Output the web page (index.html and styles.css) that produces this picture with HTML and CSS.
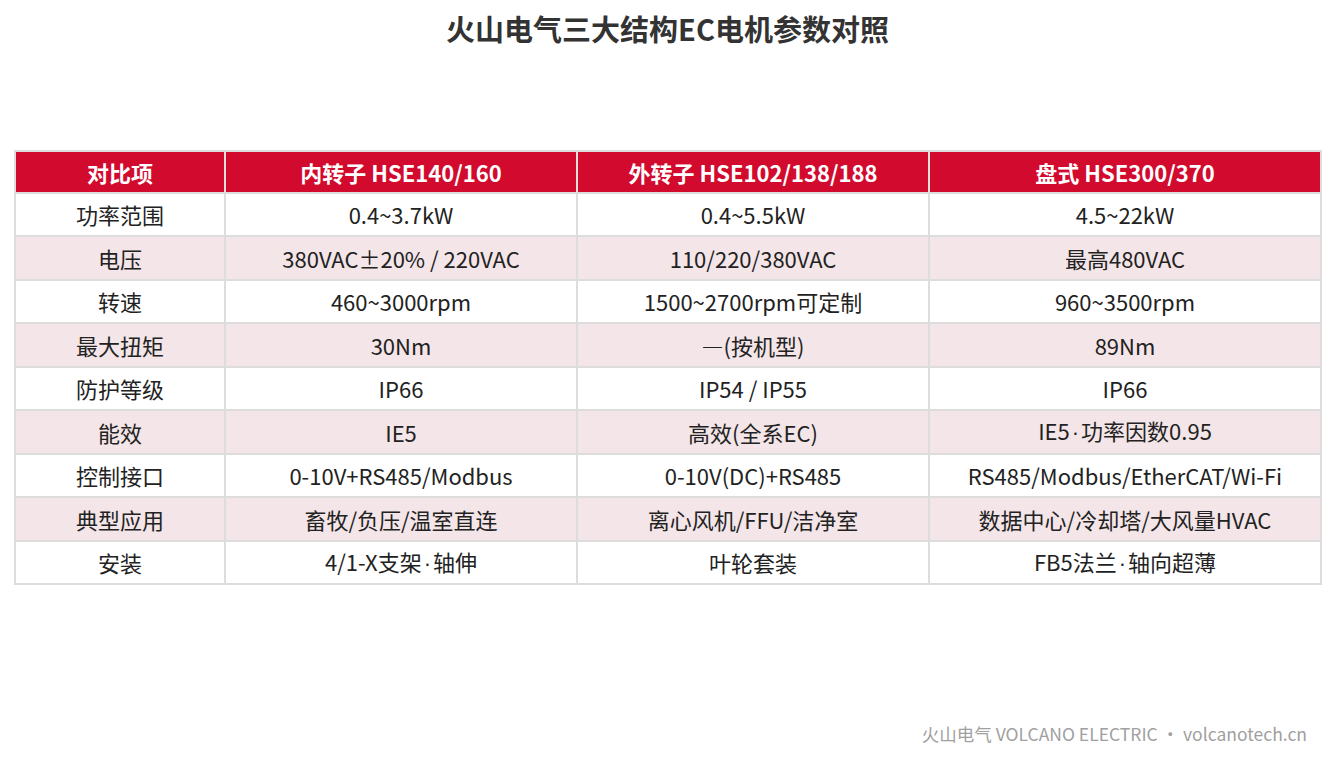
FILE: index.html
```html
<!DOCTYPE html>
<html lang="zh-CN">
<head>
<meta charset="utf-8">
<title>火山电气三大结构EC电机参数对照</title>
<link rel="stylesheet" href="styles.css">
</head>
<body>
<div class="page">
  <h1 class="title">火山电气三大结构EC电机参数对照</h1>
  <table class="spec">
    <colgroup>
      <col class="c1"><col class="c2"><col class="c3"><col class="c4">
    </colgroup>
    <thead>
      <tr><th>对比项</th><th>内转子 HSE140/160</th><th>外转子 HSE102/138/188</th><th>盘式 HSE300/370</th></tr>
    </thead>
    <tbody>
      <tr><td>功率范围</td><td>0.4~3.7kW</td><td>0.4~5.5kW</td><td>4.5~22kW</td></tr>
      <tr class="alt"><td>电压</td><td>380VAC±20% / 220VAC</td><td>110/220/380VAC</td><td>最高480VAC</td></tr>
      <tr><td>转速</td><td>460~3000rpm</td><td>1500~2700rpm可定制</td><td>960~3500rpm</td></tr>
      <tr class="alt"><td>最大扭矩</td><td>30Nm</td><td>—(按机型)</td><td>89Nm</td></tr>
      <tr><td>防护等级</td><td>IP66</td><td>IP54 / IP55</td><td>IP66</td></tr>
      <tr class="alt"><td>能效</td><td>IE5</td><td>高效(全系EC)</td><td>IE5<span class="dot">·</span>功率因数0.95</td></tr>
      <tr><td>控制接口</td><td>0-10V+RS485/Modbus</td><td>0-10V(DC)+RS485</td><td>RS485/Modbus/EtherCAT/Wi-Fi</td></tr>
      <tr class="alt"><td>典型应用</td><td>畜牧/负压/温室直连</td><td>离心风机/FFU/洁净室</td><td>数据中心/冷却塔/大风量HVAC</td></tr>
      <tr><td>安装</td><td>4/1-X支架<span class="dot">·</span>轴伸</td><td>叶轮套装</td><td>FB5法兰<span class="dot">·</span>轴向超薄</td></tr>
    </tbody>
  </table>
  <div class="footer">火山电气 VOLCANO ELECTRIC · volcanotech.cn</div>
</div>
</body>
</html>
```
FILE: styles.css
```css
html, body {
  margin: 0;
  padding: 0;
  background: #ffffff;
}
body {
  font-family: "Noto Sans CJK SC", "Noto Sans", sans-serif;
  color: #222222;
}
.page {
  height: 759px;
  box-sizing: border-box;
  padding: 6px 14px 0 14px;
  display: flex;
  flex-direction: column;
}
.title {
  margin: 0;
  text-align: center;
  font-size: 29px;
  line-height: 44px;
  font-weight: 700;
  color: #333333;
}
.spec {
  margin-top: 100px;
  width: 1306px;
  border-collapse: collapse;
  table-layout: fixed;
  font-size: 22px;
}
.c1 { width: 210px; }
.c2 { width: 352px; }
.c3 { width: 352px; }
.c4 { width: 392px; }
.spec th, .spec td {
  border: 2px solid #dddddd;
  text-align: center;
  padding: 0;
  line-height: 26px;
}
.spec td {
  height: 41.5px;
  color: #222222;
  background: #ffffff;
}
.spec th {
  height: 39.5px;
  background: #d20a2e;
  color: #ffffff;
  font-weight: 700;
  font-size: 22px;
}
.spec tr.alt td {
  background: #f4e5e8;
}
.dot {
  font-family: "Liberation Sans", sans-serif;
  padding: 0 2px;
}
.footer {
  margin-top: auto;
  margin-bottom: 14px;
  text-align: right;
  padding-right: 14px;
  font-size: 17.5px;
  line-height: 22px;
  color: #a0a0a0;
}
```
